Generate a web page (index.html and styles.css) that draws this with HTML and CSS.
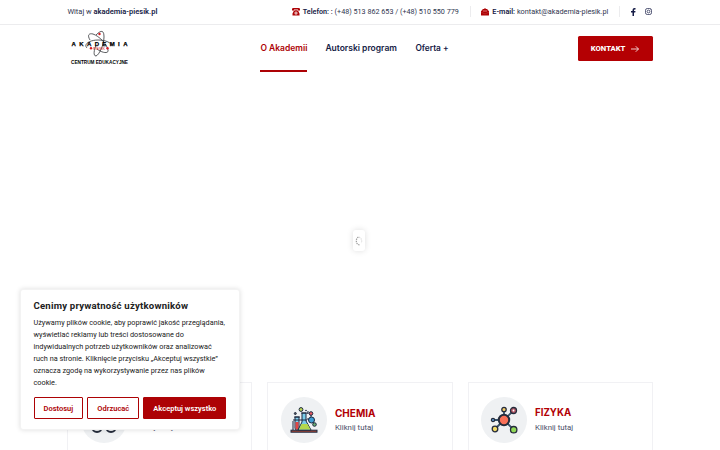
FILE: index.html
```html
<!DOCTYPE html>
<html lang="pl">
<head>
<meta charset="utf-8">
<title>Akademia Piesik</title>
<link rel="stylesheet" href="styles.css">
</head>
<body>
<div class="topbar">
  <div class="container topbar-inner">
    <p class="welcome">Witaj w <b>akademia-piesik.pl</b></p>
    <div class="contact phone">
      <svg width="8" height="8" viewBox="0 0 16 16"><path fill="#ad0205" d="M0 5V2Q0 0 3 0H13Q16 0 16 2V5H12V3H4V5ZM4 5H6V4H7V5H9V4H10V5H12L15 11V15H1V11Z"/><circle cx="8" cy="10" r="3" fill="#fff"/><circle cx="8" cy="10" r="1.3" fill="#ad0205"/></svg>
      <span class="tel"><b>Telefon: :</b> (+48) 513 862 653 / (+48) 510 550 779</span>
    </div>
    <div class="contact email">
      <svg width="8" height="8" viewBox="0 0 16 16"><path fill="#ad0205" d="M0 6L3 4V2H6L8 0L10 2H13V4L16 6V14Q16 15 15 15H1Q0 15 0 14Z"/><path d="M4 5H12M4 7H12" stroke="#de7779"/><path d="M0 8L8 12L16 8" fill="none" stroke="#d76769" stroke-width=".7"/></svg>
      <span class="mail"><b>E-mail:</b> kontakt@akademia-piesik.pl</span>
    </div>
    <div class="social">
      <svg width="5" height="8" viewBox="0 0 10 16"><path fill="#151b45" d="M3 16V9H0V6H3V4Q3 0 7 0H9V3H7.5Q6 3 6 4.5V6H9L8.5 9H6V16Z"/></svg>
      <svg width="7" height="7" viewBox="0 0 14 14" fill="none" stroke="#151b45" stroke-width="1.4"><rect x="1" y="1" width="12" height="12" rx="3.5"/><circle cx="7" cy="7" r="2.8"/><path d="M10.3 3.5h.8"/></svg>
    </div>
  </div>
</div>
<header class="container header">
  <svg class="logo" width="60" height="36" viewBox="0 0 60 36">
    <g fill="none" stroke="#25282c" stroke-width=".75">
      <path d="M20 10C17 5 19 3 23 4C29 6 37 14 38 20C39 24 32 23 27 19"/>
      <path d="M26 5C32-1 34 1 34 7C34 15 29 25 26 26C23 26 24 20 26 15"/>
      <path d="M17 18C13 14 20 10 28 10C36 10 42 13 41 16"/>
    </g>
    <g fill="#d71920"><circle cx="29.5" cy="4" r="1.2"/><circle cx="21" cy="18.2" r="1.2"/><circle cx="37.5" cy="18.2" r="1.2"/></g>
    <text class="logo-name" x="1.5" y="16" textLength="56">AKADEMIA</text>
    <text class="logo-red" x="23" y="19.8" textLength="12" lengthAdjust="spacingAndGlyphs">PIESIK</text>
    <text class="logo-sub" x="1" y="34" textLength="57" lengthAdjust="spacingAndGlyphs">CENTRUM EDUKACYJNE</text>
  </svg>
  <nav class="nav">
    <a class="active"><span>O Akademii</span></a><a class="program">Autorski program</a><a class="offer">Oferta +</a>
  </nav>
  <a class="cta"><span>KONTAKT</span><svg width="8" height="8" viewBox="0 0 16 16" fill="none" stroke="#fff" stroke-width="1.6"><path d="M0 8H15M9.5 2.5L15 8L9.5 13.5"/></svg></a>
</header>
<main class="hero">
  <div class="loader"><svg width="8" height="12" viewBox="0 0 8 12" fill="none" stroke="#9b9b9b" stroke-width="1.2" stroke-dasharray="1.4 .8"><path d="M3.4 2Q1.2 3.5 1.3 6Q1.6 9.8 5 10"/><path stroke="#dedede" d="M4 2Q7.5 4 6.4 8"/></svg></div>
</main>
<section class="container cards">
  <article class="card">
    <div class="disc"><svg width="28" height="28" viewBox="0 0 28 28" fill="none" stroke="#252c3c" stroke-width="1.8"><circle cx="7" cy="21" r="5"/><circle cx="21" cy="21" r="5"/><path d="M12 20Q14 18 16 20"/></svg></div>
    <div class="card-text"><h3>BIOLOGIA</h3><p>Kliknij tutaj</p></div>
  </article>
  <article class="card">
    <div class="disc"><svg width="28" height="28" viewBox="0 0 28 28" stroke="#1b2940" stroke-width="1">
      <rect x="1" y="24.2" width="26" height="2" fill="#a84532"/>
      <path d="M5 11h4v11a2 2 0 0 1-4 0z" fill="#85d0ed"/><path d="M5.5 16h3v6a1.5 1.5 0 0 1-3 0z" fill="#e34644" stroke="none"/><path d="M4 11h6M3 15v9M3 14h9"/>
      <path d="M12 7h4v8l5 9H8l4-8z" fill="#7acde9"/><path d="M11.5 18h6l3 5.5H9z" fill="#b4d84c" stroke="none"/><path d="M11 7h7M18 5v3M12 14h5"/>
      <path d="M17 13L22 13M21 8V13L24 18" fill="none"/><circle cx="21.5" cy="14" r="3" fill="#3e9ed4"/><circle cx="21" cy="7.5" r="1.8" fill="#ed5a61"/><circle cx="24.5" cy="18.5" r="1.8" fill="#69ad72"/>
      <circle cx="11" cy="3.5" r="1.9" fill="#bed957"/><circle cx="5.3" cy="7.5" r="1" fill="#5e5755"/><circle cx="16" cy="4.5" r=".4" fill="#83a7aa"/>
    </svg></div>
    <div class="card-text"><h3>CHEMIA</h3><p>Kliknij tutaj</p></div>
  </article>
  <article class="card">
    <div class="disc"><svg width="28" height="28" viewBox="0 0 28 28" stroke="#252c3c" stroke-width="1.3">
      <path d="M14 14V4M14 14L23 5M14 14H3M14 14L5 23M14 14L24 24" stroke="#38536b" stroke-width="1.8"/>
      <circle cx="14" cy="14" r="5.2" fill="#fa7058" stroke-width="2"/><circle cx="14" cy="3.5" r="2.2" fill="#f6ce6b"/><circle cx="23.5" cy="4.5" r="3" fill="#b85866"/><circle cx="23.5" cy="4.5" r=".9" fill="#fff" stroke="none"/><circle cx="3" cy="14" r="1.6" fill="#69a4dd"/><circle cx="5" cy="23" r="2.8" fill="#f4db68"/><circle cx="23.7" cy="23.7" r="3.2" fill="#91d957"/>
    </svg></div>
    <div class="card-text"><h3 class="physics">FIZYKA</h3><p>Kliknij tutaj</p></div>
  </article>
</section>
<aside class="cookie">
  <h2>Cenimy prywatność użytkowników</h2>
  <p>Używamy plików cookie, aby poprawić jakość przeglądania,<br>wyświetlać reklamy lub treści dostosowane do<br>indywidualnych potrzeb użytkowników oraz analizować<br>ruch na stronie. Kliknięcie przycisku „Akceptuj wszystkie”<br>oznacza zgodę na wykorzystywanie przez nas plików<br>cookie.</p>
  <div class="buttons"><button class="b1">Dostosuj</button><button class="b2">Odrzucać</button><button class="accept">Akceptuj wszystko</button></div>
</aside>
</body>
</html>
```
FILE: styles.css
```css
* { box-sizing: border-box; }
body { margin: 0; height: 450px; overflow: hidden; background: #fff; color: #30364f; font-family: Roboto, sans-serif; font-size: 7.25px; }
h2, h3, p { margin: 0; }
.container { width: 585.2px; margin-left: 67.4px; }
.topbar { height: 25px; border-bottom: 1px solid #ececee; }
.topbar-inner { display: flex; height: 23.4px; align-items: center; }
.topbar b { font-weight: 600; color: #151b45; }
.welcome { width: 224.4px; font-size: 7.5px; }
.contact { display: flex; align-items: center; gap: 3px; white-space: nowrap; }
.phone { width: 179px; border-right: 1px solid #ececee; height: 11px; font-size: 7.2px; }
.email { margin-left: 10.5px; width: 138.5px; border-right: 1px solid #ececee; height: 11px; font-size: 7.3px; }
.social { display: flex; align-items: center; gap: 9px; margin-left: 11px; }
.header { display: flex; height: 47px; align-items: center; }
.logo { margin-left: 2.6px; margin-bottom: 1px; overflow: visible; }
.logo-name { font: 700 6px "Liberation Sans", sans-serif; stroke: #000; stroke-width: .25; }
.logo-red { font: 4px "Liberation Sans", sans-serif; fill: #d71920; }
.logo-sub { font: 700 5.5px "Liberation Sans", sans-serif; }
.nav { display: flex; align-self: stretch; gap: 18px; margin-left: 130.4px; font: 600 8.5px/46px Inter, sans-serif; color: #151b45; white-space: nowrap; }
.nav a { height: 47px; }
.nav .active { color: #ad0205; width: 47px; border-bottom: 2px solid #ad0205; }
.program { width: 72px; }
.nav .offer { font-size: 8.3px; }
.cta { margin-left: auto; width: 75px; height: 25px; background: #b40003; border-radius: 1.5px; display: flex; align-items: center; justify-content: center; gap: 6px; color: #fff; font-weight: 800; font-size: 7.7px; }
.hero { height: 310px; display: flex; justify-content: center; align-items: flex-start; padding-top: 158px; }
.loader { width: 12px; height: 21px; margin-left: -2px; border-radius: 3px; background: #fff; box-shadow: 0 0 6px #0002; display: flex; align-items: center; justify-content: center; }
.cards { display: grid; grid-template-columns: repeat(3, 1fr); gap: 15px; }
.card { height: 75px; border: 1px solid #f1f1f4; display: flex; align-items: center; padding-left: 12.5px; gap: 8px; }
.disc { width: 46px; height: 46px; border-radius: 50%; background: #eff1f3; display: flex; align-items: center; justify-content: center; }
.card-text { padding-top: 1px; }
.card h3 { font: 700 10px/14px Inter, sans-serif; color: #b20005; }
.card .physics { font-size: 9.7px; }
.card p { margin-top: 2.5px; font-size: 7.8px; line-height: 12px; color: #4a4e69; }
.cookie { position: absolute; left: 20px; top: 289px; width: 220px; height: 141px; padding: 9px 12.5px; background: #fff; border: 1px solid #f3f3f3; border-radius: 3px; box-shadow: 0 0 5px #0002; color: #212121; }
.cookie h2 { font-size: 9.6px; letter-spacing: .2px; line-height: 13px; font-weight: 700; white-space: nowrap; }
.cookie p { margin-top: 5px; font-size: 7.3px; line-height: 12px; white-space: nowrap; }
.buttons { display: flex; gap: 4px; margin-top: 8px; }
button { padding: 0; height: 22px; border: 1px solid #ad0205; border-radius: 1px; background: #fff; color: #ad0205; font: 600 7.5px Roboto, sans-serif; white-space: nowrap; }
.b1 { width: 50px; }
.b2 { width: 52px; }
.accept { width: 83.5px; background: #ad0205; color: #fff; }
```
